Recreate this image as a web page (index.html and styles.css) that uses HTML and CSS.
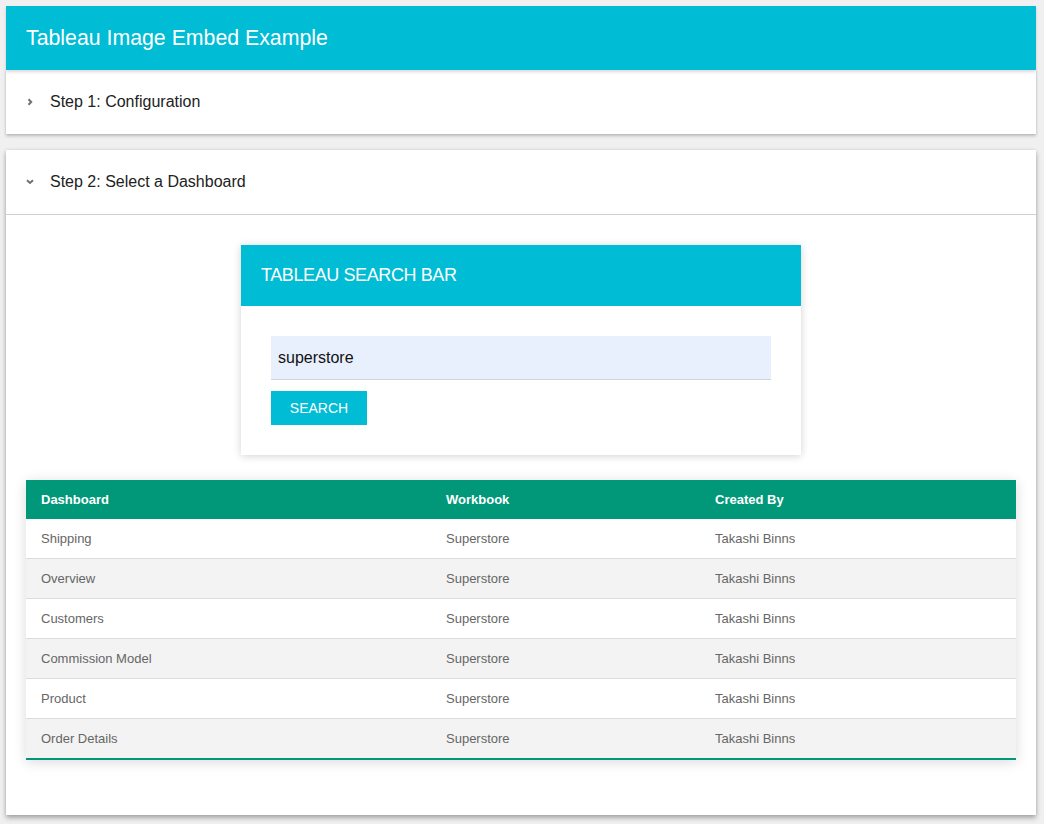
FILE: index.html
```html
<!DOCTYPE html>
<html>
<head>
<meta charset="utf-8">
<link rel="stylesheet" href="styles.css">
</head>
<body>
<header class="app-bar">Tableau Image Embed Example</header>
<section class="panel">
  <div class="panel-head">
    <svg class="chev" width="10" height="10" viewBox="0 0 10 10"><path d="M3.5 2.3 L6.2 5 L3.5 7.7" fill="none" stroke="#707070" stroke-width="2"/></svg>
    <span>Step 1: Configuration</span>
  </div>
</section>
<section class="panel panel-open">
  <div class="panel-head panel-head-open">
    <svg class="chev" width="10" height="10" viewBox="0 0 10 10"><path d="M2 3.3 L5 6 L8 3.3" fill="none" stroke="#707070" stroke-width="2"/></svg>
    <span>Step 2: Select a Dashboard</span>
  </div>
  <div class="panel-body">
    <div class="search-card">
      <div class="search-head">TABLEAU SEARCH BAR</div>
      <div class="search-body">
        <div class="search-input">superstore</div>
        <button class="search-btn">SEARCH</button>
      </div>
    </div>
    <table class="results">
      <thead>
        <tr><th class="c1">Dashboard</th><th class="c2">Workbook</th><th>Created By</th></tr>
      </thead>
      <tbody>
        <tr><td>Shipping</td><td>Superstore</td><td>Takashi Binns</td></tr>
        <tr><td>Overview</td><td>Superstore</td><td>Takashi Binns</td></tr>
        <tr><td>Customers</td><td>Superstore</td><td>Takashi Binns</td></tr>
        <tr><td>Commission Model</td><td>Superstore</td><td>Takashi Binns</td></tr>
        <tr><td>Product</td><td>Superstore</td><td>Takashi Binns</td></tr>
        <tr><td>Order Details</td><td>Superstore</td><td>Takashi Binns</td></tr>
      </tbody>
    </table>
  </div>
</section>
</body>
</html>
```
FILE: styles.css
```css
html, body {
  margin: 0;
  padding: 0;
}
body {
  background: #f0f0f0;
  font-family: "Liberation Sans", Arial, sans-serif;
  padding: 6px 8px 0 6px;
  height: 824px;
  box-sizing: border-box;
  overflow: hidden;
}
.app-bar {
  position: relative;
  z-index: 2;
  height: 64px;
  background: #00bcd4;
  color: #fff;
  font-size: 21.3px;
  display: flex;
  align-items: center;
  padding-left: 20px;
  box-shadow: 0 2px 3px rgba(0,0,0,0.15);
}
.panel {
  background: #fff;
  box-shadow: 0 2px 3px rgba(0,0,0,0.22), 0 0 2px rgba(0,0,0,0.08);
}
.panel-open {
  margin-top: 16px;
  box-shadow: 0 3px 5px rgba(0,0,0,0.3), 0 0 3px rgba(0,0,0,0.1);
}
.panel-head {
  height: 64px;
  display: flex;
  align-items: center;
  padding-left: 19px;
  font-size: 16px;
  color: #222;
}
.panel-head-open {
  border-bottom: 1px solid #d0d0d0;
}
.chev {
  margin-right: 15px;
}
.panel-body {
  padding: 30px 20px 55px;
}
.search-card {
  width: 560px;
  margin: 0 auto 25px;
  background: #fff;
  box-shadow: 0 1px 8px rgba(0,0,0,0.18);
}
.search-head {
  height: 61px;
  background: #00bcd4;
  color: #fff;
  font-size: 18px;
  display: flex;
  align-items: center;
  padding-left: 20px;
  letter-spacing: -0.4px;
}
.search-body {
  padding: 30px;
}
.search-input {
  height: 43px;
  background: #e8f0fe;
  border-bottom: 1px solid #d4d4dc;
  display: flex;
  align-items: center;
  padding-left: 7px;
  font-size: 16px;
  color: #111;
}
.search-btn {
  display: block;
  margin-top: 11px;
  width: 96px;
  height: 34px;
  background: #00bcd4;
  border: none;
  color: #fff;
  font-family: "Liberation Sans", Arial, sans-serif;
  font-size: 14px;
  padding: 0;
}
.results {
  width: 100%;
  border-collapse: collapse;
  font-size: 13px;
  box-shadow: 0 2px 12px rgba(0,0,0,0.15);
  border-bottom: 2px solid #009879;
}
.results th {
  background: #009879;
  color: #fff;
  text-align: left;
  font-weight: bold;
  height: 39px;
  padding: 0 15px;
}
.results th.c1 { width: 375px; }
.results th.c2 { width: 239px; }
.results td {
  height: 39px;
  padding: 0 15px;
  color: #666;
  border-bottom: 1px solid #dddddd;
}
.results tbody tr:nth-child(even) td {
  background: #f3f3f3;
}
.results tbody tr:last-child td {
  border-bottom: none;
}
```
